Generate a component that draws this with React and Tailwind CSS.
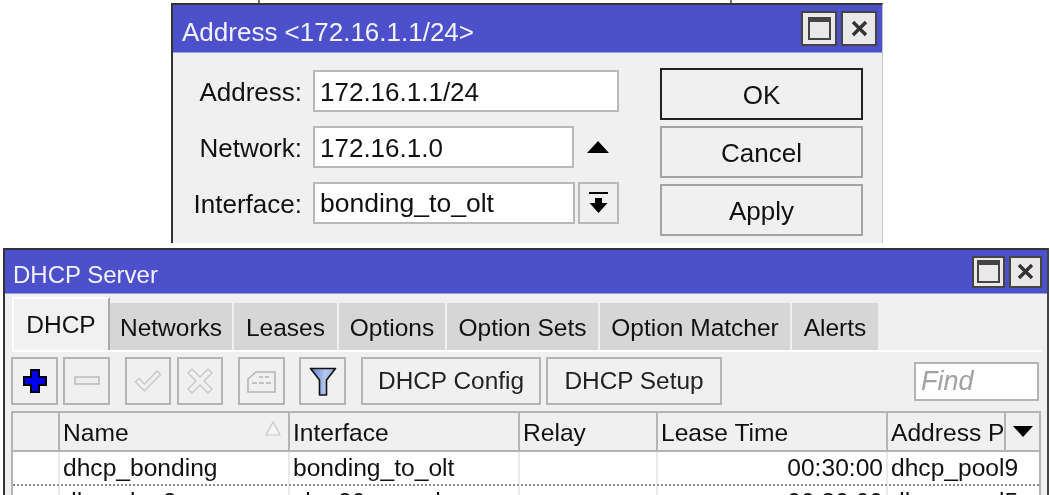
const FONT = "font-['Liberation_Sans',Arial,sans-serif]";

function WinButtons({ big }) {
  return (
    <div className="flex gap-[4px]">
      <div className={`${big ? "w-[36px] h-[35px]" : "w-[33px] h-[32px]"} border-2 border-[#444] bg-[#ebe8e9] flex items-center justify-center`}>
        <div className="w-[23px] h-[23px] border-2 border-[#444] border-t-[5px]" />
      </div>
      <div className={`${big ? "w-[36px] h-[35px]" : "w-[33px] h-[32px]"} border-2 border-[#444] bg-[#ebe8e9] flex items-center justify-center`}>
        <svg width="17" height="17" viewBox="0 0 17 17"><path d="M2 2 L15 15 M15 2 L2 15" stroke="#333" strokeWidth="3.4" /></svg>
      </div>
    </div>
  );
}

function Field({ label, value, w, size = "text-[26px]" }) {
  return (
    <div className="flex items-center">
      <div className="w-[129px] text-right text-[26px] text-[#111] leading-none pt-[1px]">{label}</div>
      <div className={`ml-[11px] h-[42px] ${w} bg-white border-2 border-[#b9b9b9] pl-[5px] pt-[1px] flex items-center ${size} leading-none text-[#111]`}>{value}</div>
    </div>
  );
}

function DlgButton({ children, dark }) {
  return (
    <div className={`h-[52px] w-[203px] border-2 ${dark ? "border-[#222]" : "border-[#a3a3a3]"} pt-[1px] flex items-center justify-center text-[26px] leading-none text-[#111]`}>{children}</div>
  );
}

function Tab({ children, w, active }) {
  return active ? (
    <div className={`${w} h-[53px] bg-[#f1f1f1] border-t-2 border-l-2 border-t-white border-l-white border-r-2 border-r-[#a9a9a9] pt-[1px] flex items-center justify-center text-[24.5px] leading-none text-[#111]`}>{children}</div>
  ) : (
    <div className={`${w} h-[47px] bg-[#d6d6d6] flex items-center justify-center text-[24.5px] leading-none text-[#111] pt-[3px]`}>{children}</div>
  );
}

function ToolBtn({ children, w = "w-[47px]", ml = "ml-0" }) {
  return (
    <div className={`${w} ${ml} h-[48px] border-2 border-[#b4b4b4] flex items-center justify-center text-[24.4px] leading-none text-[#222] shrink-0`}>{children}</div>
  );
}

function HeadCell({ children, w }) {
  return (
    <div className={`${w} h-full border-r-2 border-[#b4b4b4] pl-[3px] pt-[3px] flex items-center text-[24.6px] leading-none text-[#111] overflow-hidden whitespace-nowrap shrink-0 relative`}>{children}</div>
  );
}

function Cell({ children, w, right }) {
  return (
    <div className={`${w} h-full border-r-2 border-[#eaeaea] px-[3px] flex items-center ${right ? "justify-end" : ""} text-[24.6px] leading-none text-[#111] overflow-hidden whitespace-nowrap shrink-0`}>{children}</div>
  );
}

const columns = ["w-[47px]", "w-[230px]", "w-[230px]", "w-[138px]", "w-[230px]", "w-[118px]"];

export default function App() {
  return (
    <div className={`${FONT} w-[1050px] h-[495px] bg-white overflow-hidden flex flex-col blur-[0.4px]`}>
      {/* table behind the dialog */}
      <div className="h-[3px] ml-[171px] w-[712px] flex shrink-0">
        <div className="w-[89px] border-r-2 border-[#777]" />
        <div className="w-[472px] border-r-2 border-[#777]" />
      </div>

      {/* Address dialog */}
      <div className="ml-[171px] w-[712px] h-[240px] border-t-2 border-l-2 border-r border-t-[#333] border-l-[#333] border-r-[#c4c4c4] bg-[#f0f0f0] flex flex-col shrink-0">
        <div className="h-[48px] bg-[#4d50cb] border-b border-[#9c9ee0] flex items-center justify-between pl-[9px] pr-[5px] shrink-0">
          <span className="text-[26px] leading-none text-[#f2f2fb] pt-[7px]">{"Address <172.16.1.1/24>"}</span>
          <WinButtons big />
        </div>
        <div className="flex pt-[16px]">
          <div className="flex flex-col gap-[14px] pt-[1px]">
            <Field label="Address:" value="172.16.1.1/24" w="w-[306px]" />
            <div className="flex items-center">
              <Field label="Network:" value="172.16.1.0" w="w-[261px]" />
              <svg className="ml-[13px]" width="22" height="12" viewBox="0 0 22 12"><path d="M11 0 L22 12 L0 12 Z" fill="#000" /></svg>
            </div>
            <div className="flex items-center">
              <Field label="Interface:" value="bonding_to_olt" w="w-[262px]" size="text-[26.5px]" />
              <div className="ml-[3px] w-[41px] h-[42px] border-2 border-[#b9b9b9] flex items-center justify-center">
                <svg width="19" height="23" viewBox="0 0 19 23">
                  <path d="M0 1 H19" stroke="#000" strokeWidth="2" />
                  <path d="M6 6 H13 V11 H18.5 L9.5 21 L0.5 11 H6 Z" fill="#000" />
                </svg>
              </div>
            </div>
          </div>
          <div className="ml-[41px] flex flex-col gap-[6px] -mt-[1px]">
            <DlgButton dark>OK</DlgButton>
            <DlgButton>Cancel</DlgButton>
            <DlgButton>Apply</DlgButton>
          </div>
        </div>
      </div>

      <div className="h-[5px] shrink-0" />

      {/* DHCP Server window */}
      <div className="ml-[3px] w-[1046px] flex-1 border-t-2 border-l-2 border-r-2 border-t-[#333] border-l-[#333] border-r-[#444] bg-[#f0f0f0] flex flex-col min-h-0">
        <div className="h-[44px] bg-[#4d50cb] border-b border-[#9c9ee0] flex items-center justify-between pl-[8px] pr-[5px] shrink-0">
          <span className="text-[24px] leading-none text-[#f2f2fb] pt-[6px]">DHCP Server</span>
          <WinButtons />
        </div>

        <div className="flex items-end pl-[7px] h-[56px] shrink-0 gap-[2px]">
          <Tab active w="w-[98px]">DHCP</Tab>
          <Tab w="w-[122px] -ml-[2px]">Networks</Tab>
          <Tab w="w-[103px]">Leases</Tab>
          <Tab w="w-[106px]">Options</Tab>
          <Tab w="w-[151px]">Option Sets</Tab>
          <Tab w="w-[190px]">Option Matcher</Tab>
          <Tab w="w-[86px]">Alerts</Tab>
        </div>
        <div className="h-[2px] ml-[7px] w-[1030px] bg-white shrink-0" />

        <div className="flex items-center pl-[6px] pt-[5px] h-[53px] shrink-0">
          <ToolBtn>
            <svg width="24" height="24" viewBox="0 0 24 24"><path d="M8 1 H16 V8 H23 V16 H16 V23 H8 V16 H1 V8 H8 Z" fill="#0000f0" stroke="#000" strokeWidth="2" /></svg>
          </ToolBtn>
          <ToolBtn ml="ml-[5px]">
            <svg width="26" height="10" viewBox="0 0 26 10"><rect x="1" y="1" width="24" height="7" fill="#ececec" stroke="#bdbdbd" strokeWidth="1.6" /></svg>
          </ToolBtn>
          <ToolBtn w="w-[46px]" ml="ml-[15px]">
            <svg width="28" height="24" viewBox="0 0 28 24"><path d="M1.5 13 L5 9.5 L10.5 15 L23 2 L26.5 5.5 L10.5 22 Z" fill="#f0f0f0" stroke="#c8c8c8" strokeWidth="1.4" /></svg>
          </ToolBtn>
          <ToolBtn w="w-[46px]" ml="ml-[6px]">
            <svg width="26" height="26" viewBox="0 0 26 26"><path d="M5 1 L13 9 L21 1 L25 5 L17 13 L25 21 L21 25 L13 17 L5 25 L1 21 L9 13 L1 5 Z" fill="#f0f0f0" stroke="#c8c8c8" strokeWidth="1.4" /></svg>
          </ToolBtn>
          <ToolBtn ml="ml-[15px]">
            <svg width="29" height="23" viewBox="0 0 29 23"><path d="M1 9 L9 2 H28 V22 H1 Z" fill="none" stroke="#b4b4b4" strokeWidth="1.6" /><path d="M12 7 H16 M18 7 H22 M5 13 H10 M12 13 H17 M19 13 H24" stroke="#b4b4b4" strokeWidth="1.6" /></svg>
          </ToolBtn>
          <ToolBtn ml="ml-[14px]">
            <svg width="28" height="29" viewBox="0 0 28 29">
              <defs><linearGradient id="fun" x1="0" x2="1" y1="0" y2="0"><stop offset="0" stopColor="#5f7fd0" /><stop offset="0.6" stopColor="#b8c8ee" /><stop offset="1" stopColor="#8ea6dd" /></linearGradient></defs>
              <path d="M1.5 1.5 H26.5 L17.5 13 V28 H10.5 V13 Z" fill="url(#fun)" stroke="#111" strokeWidth="1.6" strokeLinejoin="round" />
            </svg>
          </ToolBtn>
          <ToolBtn w="w-[180px]" ml="ml-[15px]">DHCP Config</ToolBtn>
          <ToolBtn w="w-[176px]" ml="ml-[5px]">DHCP Setup</ToolBtn>
          <div className="ml-[192px] w-[125px] h-[39px] bg-white border-2 border-[#b4b4b4] pl-[5px] flex items-center italic text-[27px] leading-none text-[#a2a2a2] shrink-0">Find</div>
        </div>

        <div className="ml-[6px] w-[1030px] flex-1 border-t-2 border-l-2 border-r-2 border-[#b4b4b4] flex flex-col min-h-0 mt-[6px]">
          <div className="h-[37px] border-b-2 border-[#b4b4b4] flex shrink-0 box-content">
            <HeadCell w={columns[0]} />
            <HeadCell w={columns[1]}>
              Name
              <svg className="absolute right-[7px] top-[8px]" width="16" height="16" viewBox="0 0 16 16"><path d="M8 1 L15 14 H1 Z" fill="#f4f4f4" stroke="#c8c8c8" strokeWidth="1.2" /></svg>
            </HeadCell>
            <HeadCell w={columns[2]}>Interface</HeadCell>
            <HeadCell w={columns[3]}>Relay</HeadCell>
            <HeadCell w={columns[4]}>Lease Time</HeadCell>
            <HeadCell w={columns[5]}>Address Pool</HeadCell>
            <div className="flex-1 flex items-center justify-center">
              <svg width="20" height="11" viewBox="0 0 20 11"><path d="M0 0 H20 L10 11 Z" fill="#000" /></svg>
            </div>
          </div>
          <div className="h-[32px] bg-white flex shrink-0 border-b-2 border-dotted border-[#888] box-content">
            <Cell w={columns[0]} />
            <Cell w={columns[1]}>dhcp_bonding</Cell>
            <Cell w={columns[2]}>bonding_to_olt</Cell>
            <Cell w={columns[3]} />
            <Cell w={columns[4]} right>00:30:00</Cell>
            <div className="px-[3px] flex items-center text-[24.6px] leading-none text-[#111] whitespace-nowrap">dhcp_pool9</div>
          </div>
          <div className="flex-1 bg-white flex min-h-0 items-start overflow-hidden">
            <div className={`${columns[0]} h-[33px] border-r-2 border-[#eaeaea] shrink-0`} />
            <Cell w={`${columns[1]} !h-[33px]`}>dhcp_lan2</Cell>
            <Cell w={`${columns[2]} !h-[33px]`}>vlan20_rumah</Cell>
            <Cell w={`${columns[3]} !h-[33px]`} />
            <Cell w={`${columns[4]} !h-[33px]`} right>00:30:00</Cell>
            <div className="h-[33px] px-[3px] flex items-center text-[24.6px] leading-none text-[#111] whitespace-nowrap">dhcp_pool5</div>
          </div>
        </div>
      </div>
    </div>
  );
}
